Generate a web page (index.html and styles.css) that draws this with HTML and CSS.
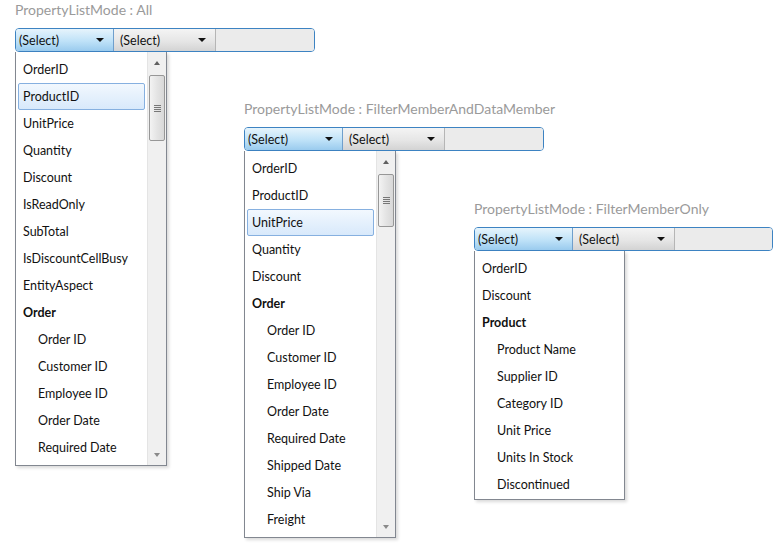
FILE: index.html
```html
<!DOCTYPE html>
<html lang="en">
  <head>
    <meta charset="UTF-8" />
    <title>PropertyListMode</title>
    <link rel="stylesheet" href="styles.css">
  </head>
  <body>
    <div class="page">
      <div class="panel panel-all">
        <div class="caption">PropertyListMode : All</div>
        <div class="combo">
          <div class="seg seg-active">(Select)<span class="arrow"></span></div>
          <div class="seg seg-idle">(Select)<span class="arrow"></span></div>
          <div class="seg seg-rest"></div>
        </div>
        <div class="dropdown dd-all">
          <ul class="items">
            <li>OrderID</li>
            <li class="selected">ProductID</li>
            <li>UnitPrice</li>
            <li>Quantity</li>
            <li>Discount</li>
            <li>IsReadOnly</li>
            <li>SubTotal</li>
            <li>IsDiscountCellBusy</li>
            <li>EntityAspect</li>
            <li class="group">Order</li>
            <li class="sub">Order ID</li>
            <li class="sub">Customer ID</li>
            <li class="sub">Employee ID</li>
            <li class="sub">Order Date</li>
            <li class="sub">Required Date</li>
          </ul>
          <div class="scrollbar">
            <span class="up"></span>
            <div class="thumb thumb-all"><i></i><i></i><i></i><i></i></div>
            <span class="down"></span>
          </div>
        </div>
      </div>

      <div class="panel panel-data">
        <div class="caption">PropertyListMode : FilterMemberAndDataMember</div>
        <div class="combo">
          <div class="seg seg-active">(Select)<span class="arrow"></span></div>
          <div class="seg seg-idle">(Select)<span class="arrow"></span></div>
          <div class="seg seg-rest"></div>
        </div>
        <div class="dropdown dd-data">
          <ul class="items">
            <li>OrderID</li>
            <li>ProductID</li>
            <li class="selected">UnitPrice</li>
            <li>Quantity</li>
            <li>Discount</li>
            <li class="group">Order</li>
            <li class="sub">Order ID</li>
            <li class="sub">Customer ID</li>
            <li class="sub">Employee ID</li>
            <li class="sub">Order Date</li>
            <li class="sub">Required Date</li>
            <li class="sub">Shipped Date</li>
            <li class="sub">Ship Via</li>
            <li class="sub">Freight</li>
          </ul>
          <div class="scrollbar">
            <span class="up"></span>
            <div class="thumb thumb-data"><i></i><i></i><i></i><i></i></div>
            <span class="down"></span>
          </div>
        </div>
      </div>

      <div class="panel panel-only">
        <div class="caption">PropertyListMode : FilterMemberOnly</div>
        <div class="combo">
          <div class="seg seg-active">(Select)<span class="arrow"></span></div>
          <div class="seg seg-idle">(Select)<span class="arrow"></span></div>
          <div class="seg seg-rest"></div>
        </div>
        <div class="dropdown dd-only">
          <ul class="items">
            <li>OrderID</li>
            <li>Discount</li>
            <li class="group">Product</li>
            <li class="sub">Product Name</li>
            <li class="sub">Supplier ID</li>
            <li class="sub">Category ID</li>
            <li class="sub">Unit Price</li>
            <li class="sub">Units In Stock</li>
            <li class="sub">Discontinued</li>
          </ul>
        </div>
      </div>
    </div>
  </body>
</html>
```

FILE: styles.css
```css
* {
  box-sizing: border-box;
}
html,
body {
  margin: 0;
  height: 100%;
  background: #fff;
  font-family: Lato, "Open Sans", sans-serif;
  color: #111;
}
.page {
  display: flex;
  align-items: flex-start;
  padding-left: 15px;
}
.panel {
  flex: none;
  overflow: visible;
}
.panel-all {
  width: 229px;
}
.panel-data {
  width: 230px;
  margin-top: 99px;
}
.panel-only {
  width: 299px;
  margin-top: 199px;
}
.caption {
  height: 28px;
  padding-top: 1px;
  font-size: 14px;
  color: #9a9a9a;
  white-space: nowrap;
}
.combo {
  display: flex;
  width: 300px;
  height: 24px;
  border: 1px solid #3d83c2;
  border-radius: 4px;
  overflow: hidden;
  font-size: 12.5px;
}
.panel-only .combo {
  width: 299px;
}
.seg {
  position: relative;
  display: flex;
  align-items: center;
  padding-left: 3px;
}
.seg-active {
  width: 98px;
  background: linear-gradient(#e6f4fc, #bfe2f8 55%, #9acbee);
  border-right: 1px solid #6f9fcc;
}
.seg-idle {
  width: 102px;
  padding-left: 6px;
  background: linear-gradient(#f4f4f4, #e6e6e6 55%, #d3d3d3);
  border-right: 1px solid #b5b5b5;
}
.seg-rest {
  flex: 1;
  background: #ebebeb;
}
.arrow {
  position: absolute;
  right: 9px;
  top: 9px;
  border-left: 4px solid transparent;
  border-right: 4px solid transparent;
  border-top: 4px solid #111;
}
.dropdown {
  display: flex;
  width: 152px;
  border: 1px solid #828790;
  border-top: 0;
  background: #fff;
  box-shadow: 2px 2px 3px rgba(0, 0, 0, 0.15);
}
.dd-all {
  height: 414px;
}
.dd-data {
  height: 387px;
}
.dd-only {
  width: 151px;
  height: 249px;
}
.items {
  flex: 1;
  list-style: none;
  margin: 0;
  padding: 4px 2px 0 2px;
  overflow: hidden;
  font-size: 12.5px;
}
.items li {
  height: 27px;
  line-height: 25px;
  padding-left: 4px;
  border: 1px solid transparent;
  border-radius: 2px;
  white-space: nowrap;
}
.items li.selected {
  background: linear-gradient(#f2f8fe, #d8e9fb);
  border-color: #86b0e0;
}
.items li.group {
  font-weight: 700;
}
.items li.sub {
  padding-left: 19px;
}
.scrollbar {
  position: relative;
  flex: none;
  width: 19px;
  background: #f0f0f0;
  border-left: 1px solid #e4e4e4;
}
.up,
.down {
  position: absolute;
  left: 6px;
  border-left: 3.5px solid transparent;
  border-right: 3.5px solid transparent;
}
.up {
  top: 9px;
  border-bottom: 4px solid #606060;
}
.down {
  bottom: 8px;
  border-top: 4px solid #8a8a8a;
}
.thumb {
  position: absolute;
  left: 1px;
  width: 16px;
  display: flex;
  flex-direction: column;
  justify-content: center;
  align-items: center;
  gap: 1px;
  border: 1px solid #979797;
  border-radius: 2px;
  background: linear-gradient(90deg, #f3f3f3, #e4e4e4 50%, #d8d8d8);
}
.thumb-all {
  top: 23px;
  height: 66px;
}
.thumb-data {
  top: 23px;
  height: 53px;
}
.thumb i {
  display: block;
  width: 7px;
  height: 1px;
  background: #777;
}
```
